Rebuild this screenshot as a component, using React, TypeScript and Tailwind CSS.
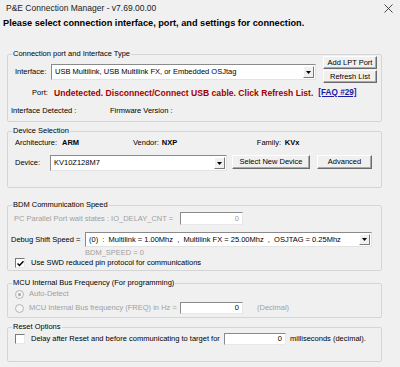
import type { ReactNode } from "react";

// Classic Win32 dialog pieces, drawn small (the reference is a downscaled screenshot).

function Group({
  title,
  className = "",
  children,
}: {
  title: string;
  className?: string;
  children: ReactNode;
}) {
  return (
    <fieldset
      className={`ml-[7px] w-[375px] border border-[#d5d5d5] rounded-[2px] px-[4px] ${className}`}
    >
      <legend className="px-[1px] text-[7.5px] leading-[10px] text-black whitespace-nowrap">
        {title}
      </legend>
      {children}
    </fieldset>
  );
}

function Combo({ text, className = "" }: { text: string; className?: string }) {
  return (
    <div
      className={`shrink-0 flex items-stretch bg-white border border-t-[#8a8a8a] border-l-[#8a8a8a] border-r-[#e3e3e3] border-b-[#e3e3e3] ${className}`}
    >
      <div className="flex-1 flex items-center pl-[3px] overflow-hidden whitespace-pre text-[7.5px] leading-[10px]">
        {text}
      </div>
      <div className="w-[11px] m-[1px] bg-[#f0f0f0] border border-t-white border-l-white border-r-[#7a7a7a] border-b-[#7a7a7a] flex items-center justify-center">
        <svg width="5" height="3" viewBox="0 0 5 3">
          <path d="M0 0H5L2.5 3Z" fill="#000" />
        </svg>
      </div>
    </div>
  );
}

function Btn({ label, className = "" }: { label: string; className?: string }) {
  return (
    <div
      className={`shrink-0 flex items-center justify-center whitespace-nowrap bg-[#f0f0f0] border border-t-white border-l-white border-r-[#6b6b6b] border-b-[#6b6b6b] shadow-[inset_-1px_-1px_0_#a9a9a9] text-[7.5px] leading-[10px] ${className}`}
    >
      {label}
    </div>
  );
}

function NumBox({ className = "" }: { className?: string }) {
  return (
    <div
      className={`shrink-0 flex items-center justify-end pr-[3px] bg-white border border-t-[#8a8a8a] border-l-[#8a8a8a] border-r-[#e8e8e8] border-b-[#e8e8e8] text-[7.5px] leading-[10px] ${className}`}
    >
      0
    </div>
  );
}

function Check({ checked }: { checked?: boolean }) {
  return (
    <div className="shrink-0 w-[10px] h-[10px] bg-white border border-t-[#7a7a7a] border-l-[#7a7a7a] border-r-[#e8e8e8] border-b-[#e8e8e8] flex items-center justify-center">
      {checked && (
        <svg width="7" height="7" viewBox="0 0 7 7">
          <path d="M0.5 3.5L2.5 5.5L6.5 1.2" stroke="#000" strokeWidth="1.5" fill="none" />
        </svg>
      )}
    </div>
  );
}

function Radio({ checked }: { checked?: boolean }) {
  return (
    <div className="shrink-0 w-[9px] h-[9px] rounded-full bg-[#f4f4f4] border border-[#b5b5b5] flex items-center justify-center">
      {checked && <div className="w-[3px] h-[3px] rounded-full bg-[#a8a8a8]" />}
    </div>
  );
}

export default function App() {
  return (
    <div className="w-[400px] h-[367px] overflow-hidden bg-[#f0f0f0] text-black font-['Liberation_Sans',Arial,sans-serif] text-[7.5px] leading-[10px] whitespace-nowrap">
      {/* title bar */}
      <div className="h-[16px] flex items-center justify-between pl-[6px] pr-[7px]">
        <span className="text-[8.5px] text-[#222]">P&amp;E Connection Manager - v7.69.00.00</span>
        <svg width="9" height="9" viewBox="0 0 9 9">
          <path d="M0.5 0.5L8.5 8.5M8.5 0.5L0.5 8.5" stroke="#333" strokeWidth="0.9" />
        </svg>
      </div>

      <div className="mt-[2px] pl-[3px] h-[11px] text-[9.2px] leading-[11px] font-bold">
        Please select connection interface, port, and settings for connection.
      </div>

      {/* Connection port */}
      <Group title="Connection port and Interface Type" className="mt-[20px] pb-[5px]">
        <div className="flex items-start mt-[-3px]">
          <div className="flex items-center mt-[8px] h-[16px]">
            <span className="ml-[3px] w-[36px] shrink-0">Interface:</span>
            <Combo
              text="USB Multilink, USB Multilink FX, or Embedded OSJtag"
              className="w-[265px] h-[16px]"
            />
          </div>
          <div className="ml-auto flex flex-col gap-[1px]">
            <Btn label="Add LPT Port" className="w-[54px] h-[13px]" />
            <Btn label="Refresh List" className="w-[54px] h-[13px]" />
          </div>
        </div>
        <div className="mt-[5px] flex items-center h-[10px]">
          <span className="ml-[20px] w-[22px] shrink-0">Port:</span>
          <span className="font-bold text-[8.6px] text-[#a00000]">
            Undetected. Disconnect/Connect USB cable. Click Refresh List.
          </span>
          <span className="ml-[5px] font-bold text-[8.2px] text-[#1a1aa6] underline">[FAQ #29]</span>
        </div>
        <div className="mt-[8px] flex items-center h-[10px] ml-[-1px]">
          <span className="w-[99px] shrink-0">Interface Detected :</span>
          <span>Firmware Version :</span>
        </div>
      </Group>

      {/* Device Selection */}
      <Group title="Device Selection" className="mt-[4px] pb-[16px]">
        <div className="mt-[2px] flex items-center h-[10px]">
          <span className="ml-[3px] w-[47px] shrink-0">Architecture:</span>
          <span className="w-[71px] shrink-0 font-bold">ARM</span>
          <span className="shrink-0">Vendor:</span>
          <span className="ml-[3px] w-[95px] shrink-0 font-bold">NXP</span>
          <span className="w-[28px] shrink-0">Family:</span>
          <span className="font-bold">KVx</span>
        </div>
        <div className="mt-[7px] flex items-start">
          <span className="ml-[3px] w-[35px] shrink-0 h-[16px] flex items-center">Device:</span>
          <Combo text="KV10Z128M7" className="w-[177px] h-[16px]" />
          <Btn label="Select New Device" className="ml-[5px] w-[78px] h-[14px]" />
          <Btn label="Advanced" className="ml-[7px] w-[55px] h-[14px]" />
        </div>
      </Group>

      {/* BDM speed */}
      <Group title="BDM Communication Speed" className="mt-[12px] pb-[2px]">
        <div className="mt-[2px] flex items-center h-[13px]">
          <span className="ml-[2px] w-[166px] shrink-0 text-[#a0a0a0]">
            PC Parallel Port wait states : IO_DELAY_CNT =
          </span>
          <NumBox className="w-[63px] h-[13px] text-[#9a9a9a]" />
        </div>
        <div className="mt-[7px] flex items-center h-[15px]">
          <span className="ml-[-1px] w-[74px] shrink-0">Debug Shift Speed =</span>
          <Combo
            text="(0)  :  Multilink = 1.00Mhz  ,  Multilink FX = 25.00Mhz  ,  OSJTAG = 0.25Mhz"
            className="w-[287px] h-[15px]"
          />
        </div>
        <div className="mt-[1px] h-[10px] flex items-center pl-[73px] text-[#a0a0a0]">
          BDM_SPEED = 0
        </div>
        <div className="h-[10px] flex items-center gap-[6px] ml-[3px]">
          <Check checked />
          <span>Use SWD reduced pin protocol for communications</span>
        </div>
      </Group>

      {/* MCU bus frequency */}
      <Group title="MCU Internal Bus Frequency (For programming)" className="mt-[7px] pb-[3px]">
        <div className="mt-[1px] h-[10px] flex items-center gap-[5px] ml-[3px] text-[#a0a0a0]">
          <Radio checked />
          <span>Auto-Detect</span>
        </div>
        <div className="mt-[3px] flex items-center h-[12px]">
          <div className="ml-[3px] w-[165px] shrink-0 flex items-center gap-[5px] text-[#a0a0a0]">
            <Radio />
            <span>MCU Internal Bus frequency (FREQ) in Hz =</span>
          </div>
          <NumBox className="w-[63px] h-[12px]" />
          <span className="ml-[14px] text-[#a0a0a0]">(Decimal)</span>
        </div>
      </Group>

      {/* Reset */}
      <Group title="Reset Options" className="mt-[4px] pb-[16px]">
        <div className="mt-[1px] flex items-center h-[12px]">
          <div className="ml-[3px] w-[209px] shrink-0 flex items-center gap-[6px]">
            <Check />
            <span>Delay after Reset and before communicating to target for</span>
          </div>
          <NumBox className="w-[62px] h-[12px]" />
          <span className="ml-[4px]">milliseconds (decimal).</span>
        </div>
      </Group>
    </div>
  );
}
